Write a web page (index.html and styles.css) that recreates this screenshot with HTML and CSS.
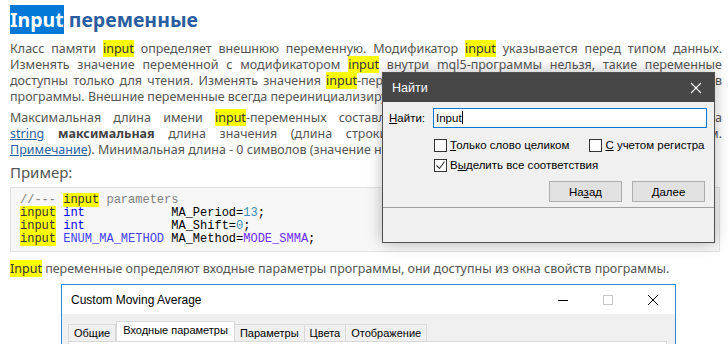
FILE: index.html
```html
<!DOCTYPE html>
<html lang="ru">
<head>
<meta charset="UTF-8">
<title>Input переменные</title>
<link rel="stylesheet" href="styles.css">
</head>
<body>

<div class="page">
  <h1 class="title"><span class="sel">Input</span> переменные</h1>

  <p class="text">
    <span class="line">Класс памяти <span class="hl">input</span> определяет внешнюю переменную. Модификатор <span class="hl">input</span> указывается перед типом данных.</span>
    <span class="line">Изменять значение переменной с модификатором <span class="hl">input</span> внутри mql5-программы нельзя, такие переменные</span>
    <span class="line">доступны только для чтения. Изменять значения <span class="hl">input</span>-переменных может только пользователь из окна свойств</span>
    <span class="line last">программы. Внешние переменные всегда переинициализируются непосредственно перед вызовом OnInit().</span>
  </p>

  <p class="text">
    <span class="line">Максимальная длина имени <span class="hl">input</span>-переменных составляет 63 символа. Для входного параметра типа</span>
    <span class="line"><a href="#">string</a> <b>максимальная</b> длина значения (длина строки) может быть от 191 до 253 символов (см.</span>
    <span class="line last"><a href="#">Примечание</a>). Минимальная длина - 0 символов (значение не задано).</span>
  </p>

  <p class="example">Пример:</p>

<pre class="code"><span class="cm">//--- <span class="hl">input</span> parameters</span>
<span class="hl">input</span> <span class="kw">int</span>            MA_Period=<span class="num">13</span>;
<span class="hl">input</span> <span class="kw">int</span>            MA_Shift=<span class="num">0</span>;
<span class="hl">input</span> <span class="en">ENUM_MA_METHOD</span> MA_Method=<span class="cn">MODE_SMMA</span>;</pre>

  <p class="text"><span class="hl">Input</span> переменные определяют входные параметры программы, они доступны из окна свойств программы.</p>

  <div class="window">
    <div class="win-bar">
      <span class="win-title">Custom Moving Average</span>
      <span class="win-btn">
        <svg width="12" height="12" viewBox="0 0 12 12"><path d="M1 6.5h10" stroke="#000" stroke-width="1"/></svg>
      </span>
      <span class="win-btn">
        <svg width="12" height="12" viewBox="0 0 12 12"><rect x="1.5" y="1.5" width="9" height="9" fill="none" stroke="#c8c8c8" stroke-width="1"/></svg>
      </span>
      <span class="win-btn">
        <svg width="12" height="12" viewBox="0 0 12 12"><path d="M1 1l10 10M11 1L1 11" stroke="#000" stroke-width="1"/></svg>
      </span>
    </div>
    <div class="win-body">
      <div class="tabs">
        <span class="tab">Общие</span>
        <span class="tab active">Входные параметры</span>
        <span class="tab">Параметры</span>
        <span class="tab">Цвета</span>
        <span class="tab">Отображение</span>
      </div>
      <div class="tab-panel"></div>
    </div>
  </div>
</div>

<div class="find">
  <div class="find-bar">
    <span>Найти</span>
    <svg width="12" height="12" viewBox="0 0 12 12"><path d="M1 1l10 10M11 1L1 11" stroke="#fff" stroke-width="1.1"/></svg>
  </div>
  <div class="find-body">
    <div class="find-row">
      <label class="find-label"><u>Н</u>айти:</label>
      <div class="find-input">Input<span class="caret"></span></div>
    </div>
    <div class="checks">
      <label class="check"><span class="box"></span><span><u>Т</u>олько слово целиком</span></label>
      <label class="check"><span class="box"></span><span><u>С</u> учетом регистра</span></label>
    </div>
    <div class="checks">
      <label class="check"><span class="box">
        <svg width="11" height="11" viewBox="0 0 11 11"><path d="M1.5 5.5l3 3 5-7" fill="none" stroke="#333" stroke-width="1.1"/></svg>
      </span><span>В<u>ы</u>делить все соответствия</span></label>
    </div>
    <div class="buttons">
      <button type="button" class="btn">На<u>з</u>ад</button>
      <button type="button" class="btn"><u>Д</u>алее</button>
    </div>
  </div>
  <div class="find-foot"></div>
</div>

</body>
</html>
```

FILE: styles.css
```css
body {
  margin: 0;
  background: #fff;
  font-family: "Noto Sans", Arial, sans-serif;
  color: #555;
  overflow: hidden;
}
.page {
  padding: 7px 6px 0 10px;
}
.title {
  margin: 0;
  font-size: 19.5px;
  line-height: 26px;
  color: #2b5e9e;
}
.sel {
  background: #0078d7;
  color: #fff;
  padding: 1px 0;
}
.text {
  margin: 8px 0 0;
  font-size: 12.5px;
  line-height: 16px;
}
.text + .text {
  margin-top: 5px;
}
.line {
  display: block;
  text-align: justify;
  text-align-last: justify;
}
.line.last {
  text-align-last: left;
}
.hl {
  background: #ffff00;
  color: #333;
}
.text a {
  color: #2b5e9e;
}
.text b {
  color: #444;
}
.example {
  margin: 4px 0 0;
  font-size: 15px;
  line-height: 20px;
  color: #555;
}
.code {
  margin: 5px 2px 0 0;
  padding: 6px 9px 5px;
  background: #f7f7f7;
  border: 1px solid #e2e2e2;
  font-family: "Liberation Mono", "Courier New", monospace;
  font-size: 12px;
  line-height: 13px;
  color: #000;
}
.code + .text {
  margin-top: 9px;
}
.cm { color: #808080; }
.kw { color: #0000ff; }
.en { color: #4343ff; }
.num { color: #3a8fb7; }
.cn { color: #6b2cff; }

/* embedded screenshot of the properties window */
.window {
  margin: 7px 0 0 51px;
  width: 613px;
  border: 1px solid #2b88d8;
  border-bottom: none;
  font-family: "Liberation Sans", Arial, sans-serif;
  font-size: 11px;
  color: #000;
}
.win-bar {
  display: flex;
  align-items: center;
  height: 29px;
  background: #fff;
}
.win-title {
  flex: 1;
  padding-left: 9px;
  font-size: 12px;
}
.win-btn {
  display: flex;
  justify-content: center;
  width: 45px;
}
.win-body {
  background: #f0f0f0;
  padding: 8px 8px 0 6px;
  height: 30px;
}
.tabs {
  display: flex;
  align-items: flex-end;
  height: 19px;
}
.tab {
  height: 16px;
  padding: 0 5px;
  border: 1px solid #d9d9d9;
  border-bottom: none;
  border-left: none;
  line-height: 17px;
  background: #f0f0f0;
}
.tab:first-child {
  border-left: 1px solid #d9d9d9;
}
.tab.active {
  height: 19px;
  padding: 0 6px;
  background: #fff;
  border-left: 1px solid #d9d9d9;
  line-height: 17px;
}
.tab-panel {
  height: 8px;
  background: #fff;
  border: 1px solid #d9d9d9;
  border-bottom: none;
}

/* find dialog lying over the page */
.find {
  position: absolute;
  left: 382px;
  top: 72px;
  width: 331px;
  height: 169px;
  border: 1px solid #4f4f4f;
  background: #f0f0f0;
  box-shadow: 0 0 14px rgba(0, 0, 0, 0.28);
  font-family: "Liberation Sans", Arial, sans-serif;
  font-size: 11.5px;
  color: #000;
}
.find-bar {
  display: flex;
  align-items: center;
  justify-content: space-between;
  height: 29px;
  padding: 0 12px 0 9px;
  background: #474747;
  color: #fff;
  font-size: 12.5px;
}
.find-body {
  padding: 6px 6px 0 6px;
  height: 99px;
}
.find-row {
  display: flex;
  align-items: center;
  gap: 10px;
}
.find-label {
  width: 34px;
}
.find-input {
  flex: 1;
  height: 18px;
  margin-right: 1px;
  padding-left: 2px;
  border: 1px solid #0078d7;
  background: #fff;
  line-height: 18px;
}
.caret {
  display: inline-block;
  width: 1px;
  height: 13px;
  background: #000;
  vertical-align: -2px;
}
.checks {
  display: flex;
  gap: 20px;
  margin: 10px 0 0 45px;
  white-space: nowrap;
}
.checks + .checks {
  margin-top: 6px;
}
.check {
  display: flex;
  align-items: center;
  gap: 3px;
  height: 14px;
}
.box {
  display: inline-flex;
  align-items: center;
  justify-content: center;
  width: 11px;
  height: 11px;
  border: 1px solid #333;
  background: #fff;
}
.buttons {
  display: flex;
  justify-content: flex-end;
  gap: 10px;
  margin: 9px 3px 0 0;
}
.btn {
  width: 73px;
  height: 21px;
  padding: 0;
  border: 1px solid #adadad;
  background: #e1e1e1;
  font-family: "Liberation Sans", Arial, sans-serif;
  font-size: 11.5px;
  color: #000;
}
.find-foot {
  height: 34px;
  border-top: 1px solid #a0a0a0;
}
```
